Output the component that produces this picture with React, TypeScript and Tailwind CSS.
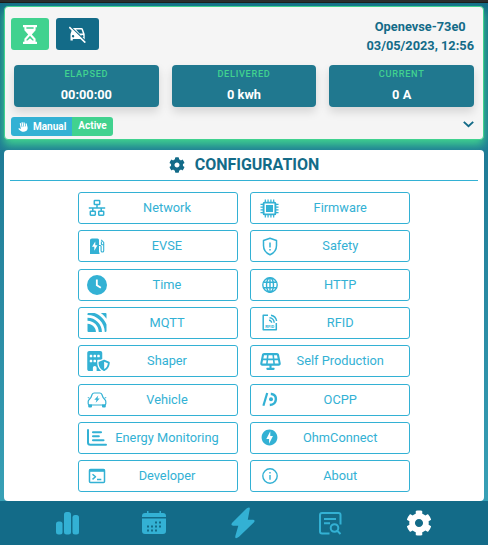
import React from "react";
import { FaBuildingShield, FaSolarPanel, FaHand } from "react-icons/fa6";
import { FaCog } from "react-icons/fa";
import { SiMqtt } from "react-icons/si";
import { MdOfflineBolt } from "react-icons/md";

type IconProps = { className?: string; children?: React.ReactNode; box?: string };

const Line = ({ className = "w-5 h-5", children, box = "0 0 24 24" }: IconProps) => (
  <svg className={className} viewBox={box} fill="none" stroke="currentColor" strokeWidth="2" strokeLinejoin="round">
    {children}
  </svg>
);
const Solid = ({ className = "w-5 h-5", children, box = "0 0 24 24" }: IconProps) => (
  <svg className={className} viewBox={box} fill="currentColor">
    {children}
  </svg>
);

const Network = () => (
  <Line className="w-[18px] h-[18px]" box="0 0 18 18">
    <g strokeWidth="1.500">
      <rect x="6.300" y="1.500" width="5.400" height="4" rx="0.600" />
      <rect x="2.300" y="12.200" width="5" height="4" rx="0.600" />
      <rect x="10.700" y="12.200" width="5" height="4" rx="0.600" />
      <path d="M9 5.500V9M0.800 9H17.200M4.800 9v3.200M13.200 9v3.200" />
    </g>
  </Line>
);
const Evse = () => (
  <Solid className="w-[15px] h-4" box="0 0 15 16">
    <path fillRule="evenodd" d="M2 0.500h5.500q1.500 0 1.500 1.500V14.500h0.500V16H0V2Q0 0.500 2 0.500zM5.300 3.500L2 8.700h2.300v4L7.500 7.300H5.300z" />
    <path fill="none" stroke="currentColor" strokeWidth="1.100" d="M9 7.500h1.200q.9 0 .9 1v4.200a1.300 1.300 0 0 0 2.600 0V4.500L11.200 1.800M13.600 6.800h-1.400q-.8 0-.8-.8V3.500" />
  </Solid>
);
const Clock = () => (
  <Solid>
    <path fillRule="evenodd" d="M12 0a12 12 0 1 0 0 24a12 12 0 0 0 0-24zM10.700 5.500h2.200v6.200l4.300 2.700l-1.200 1.900l-5.300-3.400z" />
  </Solid>
);
const Vehicle = () => (
  <Line className="w-5 h-4" box="0 0 20 16">
    <path strokeWidth="1.200" d="M2.500 13Q1.200 13 1.200 11.800V9.500Q1.200 8.500 2.200 7.500L3.800 5.700L5.100 2.500Q5.700 1 7.200 1h5.600Q14.300 1 14.900 2.500L16.200 5.700L17.800 7.500Q18.800 8.500 18.800 9.500V11.800Q18.800 13 17.500 13z" />
    <path stroke="none" fill="currentColor" d="M1.200 12.500h3.800v2q0 1-1 1h-1.800q-1 0-1-1zM15 12.500h3.800v2q0 1-1 1h-1.800q-1 0-1-1zM11.300 3.600L7.300 7.800h2.200L8.700 10.800l4-4.400h-2.200zM0.300 5.200h2.200L1.800 6.500zM19.700 5.200h-2.200l.7 1.300z" />
  </Line>
);
const Energy = () => (
  <Line className="w-5 h-[17px]" box="0 0 20 17">
    <path strokeLinecap="round" strokeWidth="2" d="M1 1v12.500q0 2.300 2.300 2.300h15.700" />
    <path strokeLinecap="round" strokeWidth="2.100" d="M6 3.200h8M6 7.200h5.800M6 11.200h10.500" />
  </Line>
);
const Developer = () => (
  <Line className="w-[18px] h-[16px]" box="0 0 18 16">
    <rect x="1.500" y="1.500" width="15" height="13" rx="1" strokeWidth="1.500" />
    <path strokeWidth="2.600" d="M1.500 2.500h15" />
    <path strokeWidth="1.500" d="M4.500 6.200l3 2.600l-3 2.600M9 11.500h4.300" />
  </Line>
);
const Chip = () => (
  <Line className="h-[19px] w-[19px]" box="0 0 20 20">
    <rect x="3.800" y="3.800" width="12.400" height="12.400" rx="1" strokeWidth="2" />
    <rect x="6.300" y="6.300" width="7.400" height="7.400" stroke="none" fill="currentColor" />
    <path strokeWidth="1.300" d="M5.600 0.500v3M8.500 0.500v3M11.500 0.500v3M14.400 0.500v3M5.600 16.500v3M8.500 16.500v3M11.500 16.500v3M14.400 16.500v3M0.500 5.600h3M0.500 8.500h3M0.500 11.500h3M0.500 14.400h3M16.500 5.600h3M16.500 8.500h3M16.500 11.500h3M16.500 14.400h3" />
  </Line>
);
const Shield = () => (
  <Line className="w-[16px] h-[19px]" box="0 0 16 19">
    <path strokeWidth="1.500" d="M8 1.200L14.500 3.500V8.500Q14.500 15 8 17.800Q1.500 15 1.500 8.500V3.500z" />
    <path strokeWidth="1.500" d="M8 5.500v5M8 12v1.600" />
  </Line>
);
const Globe = () => (
  <Line className="w-4 h-4" box="0 0 16 16">
    <g strokeWidth="1.400">
      <circle cx="8" cy="8" r="7.200" />
      <ellipse cx="8" cy="8" rx="3.500" ry="7.200" />
      <path d="M1.500 5.200h13M1.500 10.800h13M8 1v14" />
    </g>
  </Line>
);
const Rfid = () => (
  <Line className="w-4 h-[17px]" box="0 0 16 17">
    <path strokeWidth="1.500" d="M6 1.200H1.200V15.800H14.300V9" />
    <path strokeWidth="1.400" d="M7.500 3.800a5 5 0 0 1 4.700 4.900M9 1.200a7 7 0 0 1 5.600 5.800M7 6.300a2.500 2.500 0 0 1 2.600 2.500" />
    <text x="7.700" y="13.500" fontSize="4.200" fontWeight="700" textAnchor="middle" stroke="none" fill="currentColor" fontFamily="Roboto, sans-serif">RFID</text>
  </Line>
);
const Ocpp = () => (
  <Line className="w-4 h-[15px]" box="0 0 16 15">
    <path strokeWidth="2.200" d="M5.200 1L1.400 13.800" />
    <path strokeWidth="2.500" d="M8.800 2h.8c6 .4 6 10.600-1.800 11" />
    <circle cx="9" cy="7.300" r="2" stroke="none" fill="currentColor" />
  </Line>
);
const Info = () => (
  <Line className="w-4 h-4" box="0 0 16 16">
    <circle cx="8" cy="8" r="7.200" strokeWidth="1.400" />
    <path strokeWidth="1.400" d="M8 7v4.800M8 4v1.600" />
  </Line>
);

type Item = [string, React.ReactNode];

const leftItems: Item[] = [
  ["Network", <Network />],
  ["EVSE", <Evse />],
  ["Time", <Clock />],
  ["MQTT", <SiMqtt className="h-[19px] w-5" />],
  ["Shaper", <FaBuildingShield className="ml-[3px] h-5 w-[23px] shrink-0" />],
  ["Vehicle", <Vehicle />],
  ["Energy Monitoring", <Energy />],
  ["Developer", <Developer />],
];
const rightItems: Item[] = [
  ["Firmware", <Chip />],
  ["Safety", <Shield />],
  ["HTTP", <Globe />],
  ["RFID", <Rfid />],
  ["Self Production", <FaSolarPanel className="ml-px h-[17px] w-[21px] shrink-0" />],
  ["OCPP", <Ocpp />],
  ["OhmConnect", <MdOfflineBolt className="h-[19px] w-[19px]" />],
  ["About", <Info />],
];

const Menu = ({ items, padding }: { items: Item[]; padding: string }) => (
  <div className="flex w-40 flex-col gap-[6.320px]">
    {items.map(([name, icon]) => (
      <button key={name} className={`flex h-8 items-center rounded-[3px] border border-[#33b1d4] text-[#33b1d4] ${padding}`}>
        <span className="flex w-[22px] shrink-0 items-center justify-center">{icon}</span>
        <span className="flex-1 text-center text-[12.800px] leading-4 whitespace-nowrap">{name}</span>
      </button>
    ))}
  </div>
);

const Stat = ({ label, value }: { label: string; value: string }) => (
  <div className="flex h-[42px] flex-1 flex-col items-center rounded bg-[#20788f] pt-[2px] font-bold shadow-[0_5px_10px_rgba(0,0,0,0.13)]">
    <div className="text-[9.200px] leading-[14px] font-medium tracking-[0.700px] text-[#41d28f]">{label}</div>
    <div className="mt-[6px] text-[12.800px] leading-[15px] text-white">{value}</div>
  </div>
);

export default function App() {
  return (
    <div className="flex h-[545px] w-[488px] flex-col overflow-hidden bg-linear-to-b from-[#136b88] to-[#3ba5ba] font-[Roboto,sans-serif]">
      <div className="h-[3px] shrink-0 border-b border-[#1b1b1b] bg-[#2c2c2c]" />
      <header className="mx-1 mt-[3px] h-[134px] shrink-0 rounded border border-[#41d28f] bg-[#f5f5f5] pr-[9px] pl-[6px] shadow-[0_5px_10px_#41d28f]">
        <div className="flex h-[58px] justify-between">
          <div className="flex gap-[7px] pt-[11px]">
            <div className="flex h-8 w-[38px] items-center justify-center rounded-[3px] bg-[#41d28f] text-white">
              <Solid className="h-[19px] w-[14px]" box="0 0 14 19">
                <path fillRule="evenodd" d="M0 0h14v2.200h-1.400v3L8.800 9.500l3.800 4.300v3H14V19H0v-2.200h1.400v-3l3.800-4.300L1.400 5.200v-3H0zM3.400 2.200v1.600h7.200V2.200zM7 10.800l-3.600 4v.6h1.100L7 13.200l2.500 2.200h1.100v-.6z" />
              </Solid>
            </div>
            <div className="flex h-8 w-[43px] items-center justify-center rounded-[3px] bg-[#136b88] text-white">
              <Solid className="h-[17px] w-[17px]" box="0 0 17 17">
                <path fillRule="evenodd" d="M4.500 2h8q1 0 1.300.8L15.700 8v6.500h-2V13H3.800v1.500h-2.300V8L3.200 3zM7 3.500L10.500 7.500h3.400L12.500 3.500zM4 9a1.200 1.200 0 1 0 .1 2.400A1.200 1.200 0 0 0 4 9zM13.200 9a1.200 1.200 0 1 0 .1 2.400a1.200 1.200 0 0 0-.1-2.400z" />
                <path d="M1 0.500L17 15.700" stroke="#136b88" strokeWidth="1.600" />
                <path d="M0.300 1.200L16.300 16.600" stroke="white" strokeWidth="1.600" />
              </Solid>
            </div>
          </div>
          <div className="pt-[10px] text-center text-[12.800px] leading-[19px] font-bold text-[#136b88]">
            <div>Openevse-73e0</div>
            <div>03/05/2023, 12:56</div>
          </div>
        </div>
        <div className="flex gap-[13px] pl-[3px]">
          <Stat label="ELAPSED" value="00:00:00" />
          <Stat label="DELIVERED" value="0 kwh" />
          <Stat label="CURRENT" value="0 A" />
        </div>
        <div className="mt-[10px] flex items-start justify-between">
          <div className="flex h-[19px] overflow-hidden rounded-[3px] text-[10px] leading-[18px] font-bold text-white">
            <div className="flex w-[61px] items-center gap-[5px] bg-[#33b1d4] pl-[7px] leading-[17px]">
              <FaHand className="h-[10px] w-[10px] -rotate-12" />
              <span className="pb-px">Manual</span>
            </div>
            <div className="w-[41px] bg-[#41d28f] text-center">Active</div>
          </div>
          <svg className="mt-[4px] h-[7px] w-[11px]" viewBox="0 0 11 7" fill="none" stroke="#136b88" strokeWidth="1.900">
            <path d="M0.800 0.900L5.500 5.300L10.200 0.900" />
          </svg>
        </div>
      </header>

      <main className="mx-1 mt-[10px] h-[351px] shrink-0 rounded bg-white px-[6px]">
        <div className="flex h-[31px] items-center justify-center gap-[10px] border-b border-[#33b1d4] text-[16px] font-bold text-[#136b88]">
          <FaCog className="mb-px h-4 w-4" />
          <h1 className="leading-5">CONFIGURATION</h1>
        </div>
        <div className="mt-[11px] flex justify-center gap-3">
          <Menu items={leftItems} padding="pl-[7px] pr-[11px]" />
          <Menu items={rightItems} padding="pl-[7.500px] pr-[9px]" />
        </div>
      </main>

      <nav className="flex h-11 shrink-0 items-center justify-between bg-[#136b88] px-14 text-[#33b1d4]">
        <Solid className="h-6 w-[23px]" box="0 0 23 24">
          <rect x="0" y="10.500" width="6.500" height="13" rx="2.500" />
          <rect x="8" y="1" width="7" height="22.500" rx="2.500" />
          <rect x="16.500" y="4" width="6.500" height="19.500" rx="2.500" />
        </Solid>
        <Solid className="-ml-px h-6 w-6">
          <path d="M5 0h1.500v2h11V0H19v2h2q3 0 3 3v1H0V5q0-3 3-3h2z" />
          <path fillRule="evenodd" d="M0 7.500h24V20q0 3-3 3H3q-3 0-3-3zM13 10.500h2v2h-2zM17 10.500h2v2h-2zM5 14.500h2v2H5zM9 14.500h2v2H9zM13 14.500h2v2h-2zM17 14.500h2v2h-2zM5 18.500h2v2H5zM9 18.500h2v2H9zM13 18.500h2v2h-2z" />
        </Solid>
        <Solid className="h-[32px] w-6" box="0 0 24 32">
          <path d="M15.500 1.600Q19.500 -1 18.700 2.500L16.800 12.800H21.800Q24.800 13 22.800 15.600L8 29.800Q3.500 33 4.400 28.800L7.300 18.800H2.200Q-0.800 18.500 1.200 15.800z" />
        </Solid>
        <Line className="h-[23px] w-[23px]" box="0 0 23 23">
          <path strokeWidth="2" d="M10.500 21.500H3q-2 0-2-2V3q0-2 2-2h16.500q2 0 2 2v9.500M5 7h12M5 11.300h6" />
          <circle cx="15.500" cy="16" r="3.800" strokeWidth="2" />
          <path d="M18 18.500L21.500 22" />
        </Line>
        <FaCog className="h-[26px] w-[26px] text-white" />
      </nav>
    </div>
  );
}
